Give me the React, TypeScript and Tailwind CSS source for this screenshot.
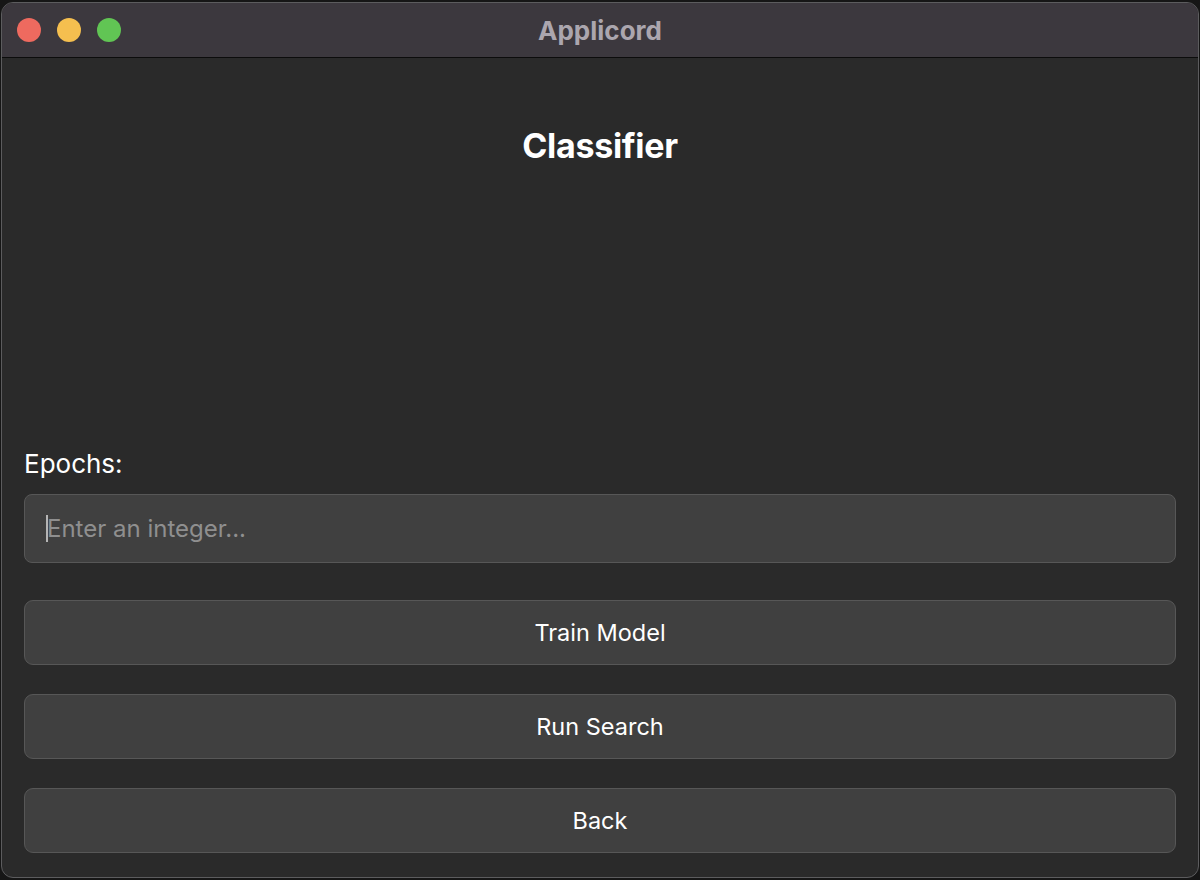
import React from "react";

export default function App() {
  const font = { fontFamily: 'Inter, "Noto Sans", "Liberation Sans", sans-serif' };
  return (
    <div className="w-[1200px] h-[880px] bg-[#161616] pt-[2px] pb-[2px] px-[1px] flex" style={font}>
      <div className="flex-1 flex flex-col rounded-[12px] border border-[#5c5c5e] overflow-hidden bg-[#2a2a2a]">
        <div className="h-[55px] shrink-0 bg-[#3c383e] border-b border-[#0c0c0c] flex items-center relative">
          <div className="flex items-center gap-[16px] pl-[15px]">
            <span className="w-[24px] h-[24px] rounded-full bg-[#ee6a5f]" />
            <span className="w-[24px] h-[24px] rounded-full bg-[#f5bf4f]" />
            <span className="w-[24px] h-[24px] rounded-full bg-[#61c554]" />
          </div>
          <div className="absolute inset-0 flex items-center justify-center text-[26px] font-bold text-[#aba6ae] pointer-events-none">
            Applicord
          </div>
        </div>
        <div className="flex-1 flex flex-col px-[22px] pb-[24px]">
          <div className="mt-[67px] h-[40px] flex items-center justify-center text-[34px] font-bold text-white tracking-[-0.3px]">
            Classifier
          </div>
          <div className="flex-1" />
          <div className="h-[30px] flex items-center text-[26px] text-white">Epochs:</div>
          <div className="mt-[16px] h-[69px] rounded-[8px] border border-[#575757] bg-[#404040] flex items-center pl-[21px] text-[24px] text-[#8f8f8f]">
            <span className="w-[2px] h-[27px] bg-[#b5b5b5] mr-[-1px]" />
            <span>Enter an integer...</span>
          </div>
          <div className="mt-[37px] flex flex-col gap-[29px]">
            {["Train Model", "Run Search", "Back"].map((t) => (
              <div
                key={t}
                className="h-[65px] rounded-[9px] border border-[#575757] bg-[#404040] flex items-center justify-center text-[23.5px] text-white"
              >
                {t}
              </div>
            ))}
          </div>
        </div>
      </div>
    </div>
  );
}
